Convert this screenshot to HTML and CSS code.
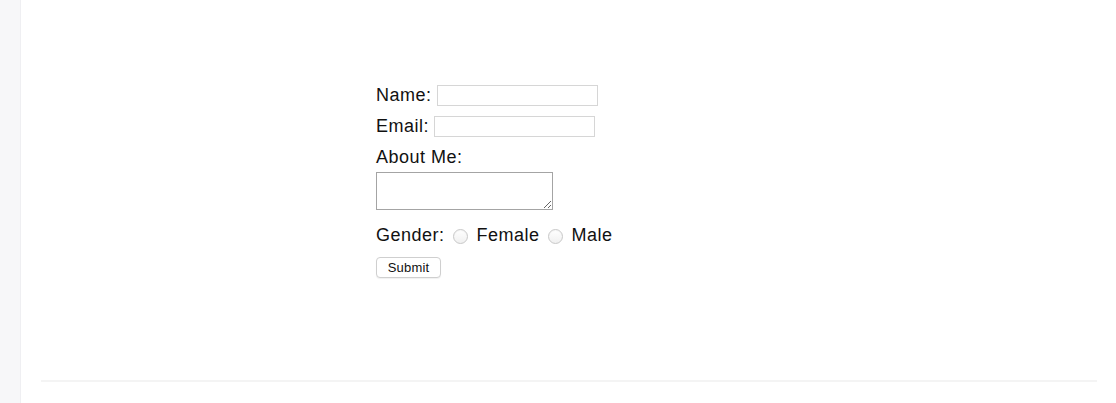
FILE: index.html
```html
<!DOCTYPE html>
<html>
<head>
<meta charset="utf-8">
<link rel="stylesheet" href="styles.css">
</head>
<body>
<div class="layout">
  <aside class="sidebar"></aside>
  <main class="main">
    <form class="form">
      <div class="row"><label class="lbl">Name:</label><input class="text name" type="text"></div>
      <div class="row"><label class="lbl">Email:</label><input class="text email" type="text"></div>
      <div class="row"><label class="lbl">About Me:</label></div>
      <textarea class="area"></textarea>
      <div class="row gender"><span class="lbl">Gender:</span><input class="radio" type="radio" name="g"><span class="lbl">Female</span><input class="radio" type="radio" name="g"><span class="lbl">Male</span></div>
      <button class="submit" type="button">Submit</button>
    </form>
    <div class="sep"></div>
  </main>
</div>
</body>
</html>
```

FILE: styles.css
```css
html, body { margin: 0; padding: 0; background: #fff; }
body { font-family: "Liberation Sans", Arial, sans-serif; color: #111; }
.layout { display: flex; height: 403px; }
.sidebar { width: 20px; flex: none; background: #f7f7f9; border-right: 1px solid #efeff2; }
.main { flex: 1; padding: 84px 19px 0 20px; }
.form { display: flex; flex-direction: column; align-items: flex-start; margin-left: 335px; font-size: 18px; }
.lbl { letter-spacing: 0.5px; }
.row { height: 23px; line-height: 23px; margin-bottom: 8px; display: flex; align-items: center; white-space: nowrap; }
.text { width: 161px; height: 21px; box-sizing: border-box; border: 1px solid #d6d6d6; padding: 0; background: #fff; outline: none; }
.name { margin: 0 0 0 5px; }
.email { margin: 0 0 0 5px; }
.area { width: 177px; height: 38px; box-sizing: border-box; border: 1px solid #a4a4a4; margin: -5px 0 0 0; padding: 0; background: #fff; }
.gender { margin-top: 14px; margin-bottom: 0; }
.radio { -webkit-appearance: none; appearance: none; width: 15px; height: 15px; box-sizing: border-box; border: 1px solid #c8c8c8; border-radius: 50%; margin: 1px 9px 0 8px; background: linear-gradient(#fff, #f0f0f0); box-shadow: inset 0 1px 1px rgba(0,0,0,0.04); }
.submit { margin-top: 10px; width: 65px; height: 21px; padding: 0; font-family: "Liberation Sans", Arial, sans-serif; font-size: 13px; letter-spacing: 0.2px; color: #111; background: #fff; border: 1px solid #cfcfcf; border-radius: 4px; box-shadow: 0 1px 1px rgba(0,0,0,0.06); }
.sep { height: 2px; background: #f4f4f4; margin-top: 102px; }
```
